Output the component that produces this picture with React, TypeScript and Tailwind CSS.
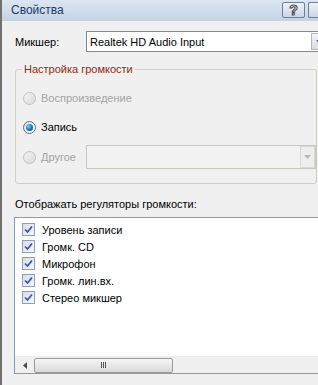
import React from "react";

const FONT = { fontFamily: "'Liberation Sans', Arial, sans-serif" };

function Radio({ checked, disabled }: { checked?: boolean; disabled?: boolean }) {
  return (
    <span
      className={`flex h-[13px] w-[13px] shrink-0 items-center justify-center rounded-full border ${
        disabled ? "border-[#c0c0c0] bg-gradient-to-br from-[#f4f4f4] to-[#dadada]" : "border-[#55709a] bg-gradient-to-br from-[#dcdcdc] to-[#ffffff]"
      }`}
    >
      {checked && (
        <span className="h-[7px] w-[7px] rounded-full bg-[radial-gradient(circle_at_35%_35%,#7fd3ff,#1a6fb5_55%,#0b3d75)]" />
      )}
    </span>
  );
}

function Check() {
  return (
    <span className="flex h-[13px] w-[13px] shrink-0 items-center justify-center border border-[#8f9fb5] bg-gradient-to-br from-[#dcdcdc] to-[#f8f8f8]">
      <svg width="9" height="9" viewBox="0 0 9 9">
        <path d="M1 4.5 L3.5 7 L8 1.5" fill="none" stroke="#2b52d6" strokeWidth="1.7" />
      </svg>
    </span>
  );
}

function Arrow({ color }: { color: string }) {
  return (
    <svg width="7" height="4" viewBox="0 0 7 4">
      <path d="M0 0 H7 L3.5 4 Z" fill={color} />
    </svg>
  );
}

export default function App() {
  const items = ["Уровень записи", "Громк. CD", "Микрофон", "Громк. лин.вх.", "Стерео микшер"];

  return (
    <div
      className="relative flex h-[385px] w-[318px] flex-col overflow-hidden border-l-2 border-[#707070] bg-[#f0f0f0] text-[11px] leading-[16px] text-black"
      style={FONT}
    >
      {/* title bar */}
      <div className="flex h-[21px] shrink-0 items-center border-b border-[#c9d3df] bg-gradient-to-b from-[#dce6f2] to-[#c5d4e4] pl-[9px]">
        <span className="text-[12px] text-[#1b3b6c]">Свойства</span>
        <div className="ml-auto flex gap-[3px]">
          <div className="flex h-[16px] w-[23px] items-center justify-center rounded-[2px] border border-[#707d92] bg-gradient-to-b from-[#edf2f8] to-[#cad6e4] text-[14px] font-bold leading-none text-white [-webkit-text-stroke:1px_#4a4a4a]">
            ?
          </div>
          <div className="h-[16px] w-[10px] rounded-l-[2px] border border-r-0 border-[#707d92] bg-gradient-to-b from-[#edf2f8] to-[#cad6e4]" />
        </div>
      </div>

      {/* mixer */}
      <div className="mt-[10px] flex h-[21px] items-center">
        <span className="w-[84px] shrink-0 pl-[13px]">Микшер:</span>
        <div className="flex h-[21px] w-[243px] shrink-0 items-center border border-[#7a8ba1] bg-white pl-[3px]">
          <span>Realtek HD Audio Input</span>
          <div className="ml-auto mr-[1px] flex h-[17px] w-[16px] items-center justify-center border border-[#b0b8c4] bg-gradient-to-b from-[#f4f4f4] to-[#dcdcdc]">
            <Arrow color="#4d6185" />
          </div>
        </div>
      </div>

      {/* group */}
      <div className="relative ml-[13px] mr-[1px] mt-[17px] h-[115px] shrink-0 rounded-[3px] border border-[#d0d0bf]">
        <span className="absolute left-[6px] top-[-9px] bg-[#f0f0f0] px-[2px] text-[#8f2b10]">Настройка громкости</span>
        <div className="flex flex-col pl-[7px] pt-[20px]">
          <div className="flex h-[16px] items-center gap-[5px] text-[#a3a3a3]">
            <Radio disabled />
            <span>Воспроизведение</span>
          </div>
          <div className="mt-[13px] flex h-[16px] items-center gap-[5px]">
            <Radio checked />
            <span>Запись</span>
          </div>
          <div className="mt-[10px] flex items-center text-[#a3a3a3]">
            <div className="flex w-[63px] items-center gap-[5px]">
              <Radio disabled />
              <span>Другое</span>
            </div>
            <div className="flex h-[24px] flex-1 items-center justify-end border border-[#c9c7ba] bg-[#f2f2f2]">
              <div className="flex h-[22px] w-[15px] items-center justify-center border border-[#d8d8d8] bg-[#eeeeee]">
                <Arrow color="#b8b8b8" />
              </div>
            </div>
          </div>
        </div>
      </div>

      {/* list */}
      <div className="mt-[12px] pl-[13px]">Отображать регуляторы громкости:</div>
      <div className="ml-[12px] mt-[5px] flex h-[157px] w-[320px] shrink-0 flex-col border border-[#7f9db9] bg-white">
        <div className="flex flex-col pl-[7px] pt-[3px]">
          {items.map((t) => (
            <div key={t} className="flex h-[17px] items-center gap-[7px]">
              <Check />
              <span>{t}</span>
            </div>
          ))}
        </div>
        <div className="mt-auto flex h-[17px] items-center border-t border-[#ececec] bg-[#f0f0f0]">
          <div className="flex w-[19px] items-center justify-center">
            <svg width="4" height="7" viewBox="0 0 4 7">
              <path d="M4 0 V7 L0 3.5 Z" fill="#4d4d4d" />
            </svg>
          </div>
          <div className="flex h-[15px] w-[139px] items-center justify-center rounded-[2px] border border-[#9a9a9a] bg-gradient-to-b from-[#f6f6f6] to-[#d9d9d9]">
            <div className="flex gap-[1px]">
              <span className="h-[6px] w-[1px] bg-[#555]" />
              <span className="h-[6px] w-[1px] bg-[#555]" />
              <span className="h-[6px] w-[1px] bg-[#555]" />
            </div>
          </div>
        </div>
      </div>
    </div>
  );
}
